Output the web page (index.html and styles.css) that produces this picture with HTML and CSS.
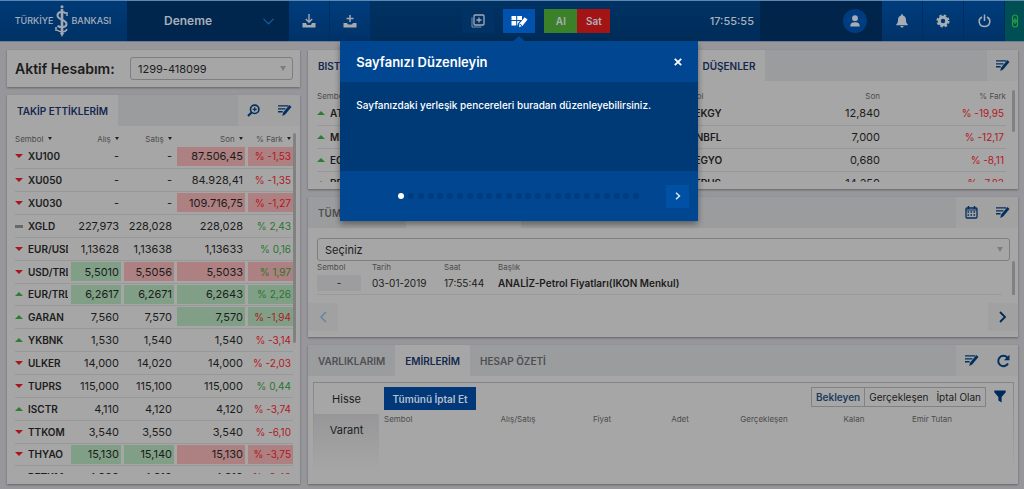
FILE: index.html
```html
<!DOCTYPE html>
<html lang="tr">
<head>
<meta charset="utf-8">
<title>Deneme</title>
<link rel="stylesheet" href="styles.css">
</head>
<body>
<svg class="defs" width="0" height="0" aria-hidden="true">
  <symbol id="edit" viewBox="0 0 16 14"><path d="M1 2h11M1 5.200h8M1 8.400h5" fill="none" stroke="currentColor" stroke-width="1.500"/><path d="M13.300 1.200l2.200 2-6.800 8-3.100 1.800.8-3.600z" fill="currentColor"/></symbol>
</svg>
<header class="topbar">
  <div class="logo">
    <span>TÜRKİYE</span>
    <svg width="14" height="32" viewBox="0 0 14 32"><g fill="none" stroke="#a3a9b3"><path d="M7 4v25" stroke-width="2.600"/><path d="M11 8.500C8.500 6 2.500 6.500 2.500 10.500c0 4.500 9 4 9 8.500 0 3.500-5 4-9 2" stroke-width="2"/><path d="M12 24c-1 3-6 4-10 1M1 22v4M12 7v4" stroke-width="1.500"/></g><circle cx="7" cy="1.800" r="1.500" fill="#a3a9b3"/><path d="M5 28h4l-2 4z" fill="#a3a9b3"/></svg>
    <span>BANKASI</span>
  </div>
  <button class="workspace"><span>Deneme</span><svg width="11" height="7" viewBox="0 0 11 7"><path d="M.5.800l5 5 5-5" fill="none" stroke="#176098" stroke-width="1.200"/></svg></button>
  <button class="tool" aria-label="İndir"><svg width="14" height="14" viewBox="0 0 14 14"><path d="M7 0v8M3.800 5L7 8.200 10.200 5" fill="none" stroke="#a6a9ae" stroke-width="1.400"/><path d="M.5 9h3.500l1 2h4l1-2h3.500v4.500H.5z" fill="#a6a9ae"/></svg></button>
  <button class="tool" aria-label="Ekle"><svg width="14" height="14" viewBox="0 0 14 14"><path d="M7 1v7M3.500 4.500h7" stroke="#a6a9ae" stroke-width="1.500"/><path d="M.5 9h3.500l1 1.500h4l1-1.500h3.500v4.500H.5z" fill="#a6a9ae"/></svg></button>
  <div class="center">
    <div class="actions">
      <button class="square" aria-label="Pencere ekle"><svg width="14" height="14" viewBox="0 0 14 14"><rect x="3" y="1" width="10" height="10" rx="1" fill="none" stroke="#a6a9ae" stroke-width="1.300"/><path d="M1 3.500v9.500h9.500" fill="none" stroke="#7d91ac"/><path d="M8 3.500v5M5.500 6h5" stroke="#a6a9ae" stroke-width="1.300"/></svg></button>
      <div class="anchor">
        <button class="square current" aria-label="Sayfayı düzenle"><svg width="17" height="13" viewBox="0 0 17 13"><g fill="#fff"><path d="M.5 1h4.700v4H.5zM6.200 1H11v4H6.200zM.5 6h4.700v4.500H.5zM6.200 6H9l-2 2.500-.4 2h-.4z"/><path d="M13.600 2.200l2.900 2.300-4.900 6.300-3.600 1.500.5-3.700z"/></g><path d="M9 9.300l2 1.400" stroke="#0052ad"/></svg></button>
        <section class="tour" role="dialog" aria-labelledby="tour-title">
          <div class="tour-head"><h2 id="tour-title">Sayfanızı Düzenleyin</h2><button class="close" aria-label="Kapat"><svg width="8" height="8" viewBox="0 0 8 8"><path d="M.8.800l6.400 6.400M7.200.800L.8 7.200" stroke="#fff" stroke-width="1.800"/></svg></button></div>
          <p class="tour-body">Sayfanızdaki yerleşik pencereleri buradan düzenleyebilirsiniz.</p>
          <div class="tour-foot">
            <div class="dots"><i class="on"></i><i></i><i></i><i></i><i></i><i></i><i></i><i></i><i></i><i></i><i></i><i></i><i></i><i></i><i></i><i></i><i></i><i></i><i></i><i></i><i></i><i></i><i></i><i></i><i></i></div>
            <button class="next" aria-label="İleri"><svg width="6" height="8" viewBox="0 0 6 8"><path d="M1 .8L4.500 4 1 7.200" fill="none" stroke="#e8eef6" stroke-width="1.400"/></svg></button>
          </div>
        </section>
      </div>
      <div class="trade"><button class="buy">Al</button><button class="sell">Sat</button></div>
    </div>
    <time>17:55:55</time>
  </div>
  <div class="user"><button class="avatar" aria-label="Kullanıcı"><svg width="10" height="12" viewBox="0 0 10 12"><circle cx="5" cy="3.200" r="2.900" fill="#a8adb5"/><path d="M.3 11.500c0-3.500 1.700-4.300 4.700-4.300s4.700.8 4.700 4.300z" fill="#a8adb5"/></svg></button></div>
  <button class="tool" aria-label="Bildirimler"><svg width="12" height="14" viewBox="0 0 12 14"><path d="M6 .3c.7 0 1 .5 1 1.200 2.300.5 3 2.500 3 5 0 2 .8 3 1.700 3.800v.9H.3v-.9C1.200 9.500 2 8.500 2 6.500c0-2.500.7-4.500 3-5 0-.7.300-1.200 1-1.200zM4.400 12h3.200c-.2 1-.8 1.500-1.600 1.500S4.600 13 4.400 12z" fill="#a8adb5"/></svg></button>
  <button class="tool" aria-label="Ayarlar"><svg width="14" height="14" viewBox="0 0 14 14"><circle cx="7" cy="7" r="3.700" fill="none" stroke="#a8adb5" stroke-width="3"/><circle cx="7" cy="7" r="5.600" fill="none" stroke="#a8adb5" stroke-width="1.900" stroke-dasharray="2.400 2"/></svg></button>
  <button class="tool" aria-label="Çıkış"><svg width="13" height="14" viewBox="0 0 13 14"><path d="M4 3C-.8 5.600 1 12.500 6.500 12.500S13.800 5.600 9 3M6.500.5v6.500" fill="none" stroke="#a8adb5" stroke-width="1.500"/></svg></button>
  <button class="tool link" aria-label="Bağlantı"><svg width="8" height="14" viewBox="0 0 8 14"><g fill="none" stroke="#289c3f" stroke-width="1.200"><rect x="1.500" y="1" width="5" height="7" rx="2.500"/><rect x="1.500" y="6" width="5" height="7" rx="2.500"/><path d="M4 4v6"/></g></svg></button>
</header>

<main class="board">
  <div class="col">
    <section class="panel account">
      <label for="acc">Aktif Hesabım:</label>
      <div class="pick"><select id="acc"><option>1299-418099</option></select></div>
    </section>
    <section class="panel watch">
      <div class="bar"><button class="tab on">TAKİP ETTİKLERİM</button><span class="fill"></span>
        <button class="act" aria-label="Sembol ara"><svg width="13" height="13" viewBox="0 0 13 13"><g fill="none" stroke="currentColor"><circle cx="7.700" cy="5.300" r="4.200" stroke-width="1.600"/><path d="M7.700 3.300v4M5.700 5.300h4" stroke-width="1.200"/><path d="M4.500 8.500L1 12" stroke-width="2.200"/></g></svg></button>
        <button class="act" aria-label="Düzenle"><svg width="15" height="13"><use href="#edit"/></svg></button></div>
      <div class="scroll">
        <table class="quotes">
          <thead><tr><th>Sembol <b></b></th><th>Alış <b></b></th><th>Satış <b></b></th><th>Son <b></b></th><th>% Fark <b></b></th></tr></thead>
          <tbody>
            <tr><th class="dn">XU100</th><td>-</td><td>-</td><td class="r">87.506,45</td><td class="r neg">% -1,53</td></tr>
            <tr><th class="dn">XU050</th><td>-</td><td>-</td><td>84.928,41</td><td class="neg">% -1,35</td></tr>
            <tr><th class="dn">XU030</th><td>-</td><td>-</td><td class="r">109.716,75</td><td class="r neg">% -1,27</td></tr>
            <tr><th class="eq">XGLD</th><td>227,973</td><td>228,028</td><td>228,028</td><td class="pos">% 2,43</td></tr>
            <tr><th class="dn">EUR/USD</th><td>1,13628</td><td>1,13638</td><td>1,13633</td><td class="pos">% 0,16</td></tr>
            <tr><th class="dn">USD/TRL</th><td class="g">5,5010</td><td class="r">5,5056</td><td class="r">5,5033</td><td class="r pos">% 1,97</td></tr>
            <tr><th class="up">EUR/TRL</th><td class="g">6,2617</td><td class="g">6,2671</td><td class="g">6,2643</td><td class="g pos">% 2,26</td></tr>
            <tr><th class="up">GARAN</th><td>7,560</td><td>7,570</td><td class="g">7,570</td><td class="g neg">% -1,94</td></tr>
            <tr><th class="up">YKBNK</th><td>1,530</td><td>1,540</td><td>1,540</td><td class="neg">% -3,14</td></tr>
            <tr><th class="dn">ULKER</th><td>14,000</td><td>14,020</td><td>14,000</td><td class="neg">% -2,03</td></tr>
            <tr><th class="dn">TUPRS</th><td>115,000</td><td>115,100</td><td>115,000</td><td class="pos">% 0,44</td></tr>
            <tr><th class="up">ISCTR</th><td>4,110</td><td>4,120</td><td>4,120</td><td class="neg">% -3,74</td></tr>
            <tr><th class="dn">TTKOM</th><td>3,540</td><td>3,550</td><td>3,540</td><td class="neg">% -6,10</td></tr>
            <tr><th class="dn">THYAO</th><td class="g">15,130</td><td class="g">15,140</td><td class="r">15,130</td><td class="r neg">% -3,75</td></tr>
            <tr><th class="up">PETKM</th><td>4,800</td><td>4,810</td><td>4,810</td><td class="neg">% -3,43</td></tr>
          </tbody>
        </table>
        <span class="thumb"></span>
      </div>
    </section>
  </div>

  <div class="col">
    <section class="panel movers">
      <div class="bar"><button class="tab on">BIST</button><span class="bright"></span><button class="tab on">DÜŞENLER</button><span class="fill"></span>
        <button class="act" aria-label="Düzenle"><svg width="15" height="13"><use href="#edit"/></svg></button></div>
      <div class="scroll pair">
        <table class="quotes rise">
          <thead><tr><th>Sembol</th></tr></thead>
          <tbody><tr><th class="up">ATA</th></tr><tr><th class="up">MEP</th></tr><tr><th class="up">EGC</th></tr><tr><th class="up">PEG</th></tr></tbody>
        </table>
        <table class="quotes fall">
          <thead><tr><th>Sembol</th><th>Son</th><th>% Fark</th></tr></thead>
          <tbody>
            <tr><th class="dn">PEKGY</th><td>12,840</td><td class="neg">% -19,95</td></tr>
            <tr><th class="dn">QNBFL</th><td>7,000</td><td class="neg">% -12,17</td></tr>
            <tr><th class="dn">PEGYO</th><td>0,680</td><td class="neg">% -8,11</td></tr>
            <tr><th class="dn">ETRUS</th><td>14,250</td><td class="neg">% -7,83</td></tr>
          </tbody>
        </table>
        <span class="thumb"></span>
      </div>
    </section>

    <section class="panel news">
      <div class="bar"><button class="tab first">TÜM</button><button class="tab on blank" aria-label="Haberler"></button><span class="fill"></span>
        <button class="act" aria-label="Takvim"><svg width="13" height="13" viewBox="0 0 13 13"><g fill="none" stroke="currentColor"><rect x="1" y="2" width="11" height="10" rx="1" stroke-width="1.300"/><path d="M3.500 0v3M9.500 0v3" stroke-width="1.400"/><path d="M2.500 6h8M2.500 9h8" stroke-width="1.600" stroke-dasharray="1.600 1.400"/><path d="M1 4h11"/></g></svg></button>
        <button class="act" aria-label="Düzenle"><svg width="15" height="13"><use href="#edit"/></svg></button></div>
      <div class="news-body">
        <div class="pick"><select aria-label="Seçiniz"><option>Seçiniz</option></select></div>
        <div class="scroll">
          <table class="feed">
            <thead><tr><th>Sembol</th><th>Tarih</th><th>Saat</th><th>Başlık</th></tr></thead>
            <tbody><tr><td><span class="tag">-</span></td><td>03-01-2019</td><td>17:55:44</td><td><strong>ANALİZ-Petrol Fiyatları(IKON Menkul)</strong></td></tr></tbody>
          </table>
          <span class="thumb"></span>
        </div>
      </div>
      <div class="pager">
        <button disabled aria-label="Önceki"><svg width="8" height="12" viewBox="0 0 8 12"><path d="M7 1L2 6l5 5" fill="none" stroke="currentColor" stroke-width="1.500"/></svg></button>
        <button aria-label="Sonraki"><svg width="8" height="12" viewBox="0 0 8 12"><path d="M1 1l5 5-5 5" fill="none" stroke="currentColor" stroke-width="1.800"/></svg></button>
      </div>
    </section>

    <section class="panel orders">
      <div class="bar"><button class="tab">VARLIKLARIM</button><button class="tab on">EMİRLERİM</button><button class="tab">HESAP ÖZETİ</button><span class="fill"></span>
        <button class="act" aria-label="Düzenle"><svg width="15" height="13"><use href="#edit"/></svg></button>
        <button class="act" aria-label="Yenile"><svg width="14" height="14" viewBox="0 0 14 14"><path d="M11.300 3.500A5.200 5.200 0 1 0 12 9.500" fill="none" stroke="currentColor" stroke-width="2"/><path d="M13.500.8v5.500H8z" fill="currentColor"/></svg></button></div>
      <div class="sheet">
        <nav class="side"><button class="on">Hisse</button><button>Varant</button></nav>
        <div class="orders-main">
          <div class="row">
            <button class="cancel">Tümünü İptal Et</button>
            <div class="seg"><button class="on">Bekleyen</button><button>Gerçekleşen</button><button>İptal Olan</button></div>
            <button class="filter" aria-label="Filtrele"><svg width="12" height="13" viewBox="0 0 12 13"><path d="M.3.500h11.400v1.700L7.600 7v5.500l-3.200-2V7L.3 2.200z" fill="#012a5c"/></svg></button>
          </div>
          <table class="heads"><thead><tr><th>Sembol</th><th>Alış/Satış</th><th>Fiyat</th><th>Adet</th><th>Gerçekleşen</th><th>Kalan</th><th>Emir Tutan</th></tr></thead></table>
        </div>
      </div>
    </section>
  </div>
</main>
</body>
</html>
```
FILE: styles.css
```css
* { box-sizing: border-box; }
body {
  margin: 0;
  min-height: 100vh;
  display: flex;
  flex-direction: column;
  background: #97979b;
  color: #1c1c1c;
  font: 11px/16px Inter, "Liberation Sans", sans-serif;
}
button, select { font: inherit; color: inherit; margin: 0; padding: 0; border: 0; background: none; }
svg { display: block; }
.defs { position: absolute; }

/* top bar */
.topbar {
  display: flex;
  height: 42px;
  border-top: 1px solid #5d87ae;
  border-bottom: 1px solid #6c7d94;
  background: linear-gradient(#003263, #002c59);
  color: #a9b0bb;
}
.logo {
  width: 127px;
  display: flex;
  align-items: center;
  justify-content: center;
  gap: 2px;
  padding-right: 1px;
  font-size: 9px;
  font-weight: 500;
  background: linear-gradient(#003a76, #003265);
}
.workspace {
  width: 162px;
  display: flex;
  align-items: center;
  justify-content: space-between;
  padding: 0 15px 0 37px;
  font-size: 12px;
  font-weight: 600;
  background: #00264e;
}
.tool {
  width: 41px;
  display: grid;
  place-items: center;
  border-right: 1px solid #002e60;
  background: linear-gradient(#003d7d, #003268);
}
.link { width: 19px; border: 0; background: #004f54; }
.center { flex: 1; display: flex; align-items: center; padding-right: 6px; }
.center time { padding-left: 8px; font-size: 11px; font-weight: 500; }
.actions { display: flex; margin: 0 auto; }
.square { width: 32px; height: 24px; display: grid; place-items: center; background: #003266; }
.square.current { background: #0052ad; }
.anchor { position: relative; margin: 0 9px; }
.trade { display: flex; font-size: 10px; font-weight: 600; }
.trade button { width: 33px; height: 24px; }
.buy { background: #3c802a; }
.sell { background: #a51415; }
.user { width: 122px; display: flex; align-items: center; justify-content: flex-end; padding-right: 15px; background: #00244a; }
.avatar { width: 24px; height: 24px; border-radius: 50%; display: grid; place-items: center; background: #003c80; }

/* tour bubble */
.tour {
  position: absolute;
  z-index: 5;
  top: 32px;
  left: 50%;
  width: 358px;
  transform: translateX(-50%);
  background: #004690;
  color: #fff;
  box-shadow: 0 3px 6px rgba(0, 0, 0, .4);
}
.tour::before {
  content: "";
  position: absolute;
  top: -5px;
  left: 50%;
  margin-left: -6px;
  border: 6px solid transparent;
  border-top: 0;
  border-bottom: 5px solid #004690;
}
.tour-head { height: 41px; display: flex; align-items: center; justify-content: space-between; padding: 0 16px; }
.tour-head h2 { margin: 0; font-size: 13px; font-weight: 600; }
.tour-body { height: 89px; margin: 0; padding: 15px 16px; background: #003a76; font-size: 10px; font-weight: 500; }
.tour-foot { height: 50px; display: flex; align-items: center; justify-content: space-between; padding: 0 9px 0 58px; }
.dots { width: 241px; display: flex; justify-content: space-between; }
.dots i { width: 6px; height: 6px; border-radius: 50%; background: #003c7d; }
.dots .on { background: #fff; }
.next { width: 23px; height: 23px; display: grid; place-items: center; background: #0050a5; }

/* board */
.board { flex: 1; display: grid; grid-template-columns: 293px 1fr; gap: 8px; padding: 8px 6px 5px 7px; }
.col { display: flex; flex-direction: column; gap: 8px; min-width: 0; }
.panel { background: #a6a6a6; box-shadow: 0 1px 2px rgba(0, 0, 0, .35); }
.account { height: 37px; display: flex; align-items: center; justify-content: space-between; padding: 0 7px 0 8px; }
.account label { font-size: 14px; font-weight: 600; }
.account .pick { width: 163px; }
.pick { position: relative; }
.pick select {
  appearance: none;
  width: 100%;
  height: 23px;
  padding: 0 7px;
  border: 1px solid #7e7e80;
  border-radius: 3px;
}
.pick::after {
  content: "";
  position: absolute;
  top: 9px;
  right: 7px;
  border: 3px solid transparent;
  border-top: 5px solid #7d7d7d;
  border-bottom: 0;
}

.bar { height: 31px; display: flex; background: #9b9c9e; }
.bar .fill { flex: 1; }
.tab { padding: 0 10px; font-size: 10px; font-weight: 600; color: #4e4f53; white-space: nowrap; }
.tab.on, .bright { background: #a6a6a6; color: #14284f; }
.act { width: 31px; display: grid; place-items: center; background: #a2a2a3; color: #012f60; }

.scroll { position: relative; overflow: hidden; }
.thumb { position: absolute; width: 3px; border-radius: 2px; background: #818181; top: 0; right: 2px; }

/* quote tables */
.quotes { border-collapse: collapse; table-layout: fixed; }
.quotes thead th, .feed thead th, .heads th { padding: 0; font-size: 8px; line-height: 12px; font-weight: 400; color: #4c4c4c; white-space: nowrap; }
.quotes thead th { text-align: right; height: 12px; }
.quotes thead th:first-child { text-align: left; }
.quotes thead b { display: inline-block; margin-left: 2px; vertical-align: 2px; border: 2px solid transparent; border-top: 3px solid #222; border-bottom: 0; }
.quotes tbody tr { height: 23px; border-bottom: 1px solid #989898; }
.quotes tbody tr:nth-child(7n) { height: 22px; }
.quotes tbody th { padding: 0; text-align: left; font-size: 10px; font-weight: 600; overflow: hidden; white-space: nowrap; }
.quotes tbody th::before { content: ""; display: inline-block; width: 0; margin-right: 5px; vertical-align: 2px; border: 4px solid transparent; }
.quotes .dn::before { border-top: 4px solid #a8161c; border-bottom: 0; }
.quotes .up::before { border-bottom: 4px solid #2c7d30; border-top: 0; }
.quotes .eq::before { width: 8px; height: 3px; border: 0; background: #686868; }
.quotes td { padding: 0 2px 0 0; text-align: right; white-space: nowrap; }
.quotes td.neg, .quotes td.pos { font-size: 10px; }
.neg { color: #b3161d; }
.pos { color: #28762b; }

.watch { flex: 1; display: flex; flex-direction: column; padding-bottom: 10px; }
.watch .scroll { flex: 1 1 0; margin: 7px 4px 0 8px; }
.watch .quotes { width: 278px; }
.watch .quotes th:nth-child(1) { width: 53px; }
.watch .quotes th:nth-child(2) { width: 53px; }
.watch .quotes th:nth-child(3) { width: 53px; }
.watch .quotes th:nth-child(4) { width: 71px; }
.watch thead th { padding-right: 2px; }
.watch td { background: no-repeat right center / calc(100% - 3px) 19px; }
.watch td.r { background-image: linear-gradient(#ad8081, #ad8081); }
.watch td.g { background-image: linear-gradient(#809f86, #809f86); }
.watch .thumb { height: 210px; right: 0; }

.movers { height: 139px; padding-bottom: 7px; display: flex; flex-direction: column; }
.movers .bright { width: 342px; }
.pair { flex: 1; display: flex; align-items: flex-start; margin: 9px 2px 0 9px; }
.rise { width: 330px; flex: none; margin-right: 28px; }
.fall { flex: 1; margin-right: 10px; }
.fall th:last-child { width: 126px; }
.fall td { padding: 0; }
.fall .neg { padding-right: 2px; }
.movers .thumb { height: 42px; right: 1px; }

/* news */
.news { height: 140px; display: flex; flex-direction: column; }
.news .first { width: 98px; text-align: left; }
.news .blank { width: 115px; }
.news-body { flex: 1; padding: 10px 2px 0 9px; }
.news-body .pick { margin-right: 6px; }
.feed { width: 98%; border-collapse: collapse; border-bottom: 1px solid #9b9b9b; }
.feed th, .feed td { padding: 0; text-align: left; font-weight: 400; white-space: nowrap; }
.feed th:nth-child(1) { width: 55px; }
.feed th:nth-child(2) { width: 72px; }
.feed th:nth-child(3) { width: 54px; }
.feed td { height: 21px; font-size: 10px; }
.feed strong { font-weight: 600; }
.tag { display: block; width: 44px; text-align: center; background: #9d9d9f; }
.news .thumb { height: 42px; right: 1px; }
.pager { display: flex; justify-content: space-between; padding-bottom: 6px; }
.pager button { width: 30px; height: 28px; display: grid; place-items: center; background: #a1a1a2; color: #012a55; }
.pager button:disabled { color: #6584a2; }

/* orders */
.orders { flex: 1; display: flex; flex-direction: column; padding-bottom: 12px; }
.sheet { flex: 1; display: flex; margin: 6px 4px 0 5px; border: 1px solid #89898b; border-bottom: 0; border-image: linear-gradient(#858587, #a6a6a6) 1; }
.side { width: 65px; display: flex; flex-direction: column; }
.side button { height: 31px; }
.side button:last-child { flex: 1; padding-bottom: 26px; background: linear-gradient(#979799, #a6a6a6); }
.orders-main { flex: 1; padding: 4px 7px 0 5px; }
.row { display: flex; align-items: flex-start; }
.cancel { width: 92px; height: 23px; background: #00387a; color: #b7bfca; font-size: 10px; font-weight: 600; white-space: nowrap; }
.seg { display: flex; margin-left: auto; border: 1px solid #828284; }
.seg button { height: 18px; padding: 0 4px; font-size: 10px; white-space: nowrap; }
.seg .on { color: #1c3c60; font-weight: 600; border-right: 1px solid #828284; }
.filter { margin: 3px 0 0 8px; }
.heads { width: 100%; border-collapse: collapse; table-layout: fixed; margin-top: 3px; }
.heads th { text-align: center; }
.heads th:nth-child(1) { width: 92px; text-align: left; }
.heads th:nth-child(2) { width: 84px; }
.heads th:nth-child(3) { width: 84px; }
.heads th:nth-child(4) { width: 72px; }
.heads th:nth-child(5) { width: 96px; }
.heads th:nth-child(6) { width: 84px; }
.heads th:last-child { padding-right: 38px; }
```
